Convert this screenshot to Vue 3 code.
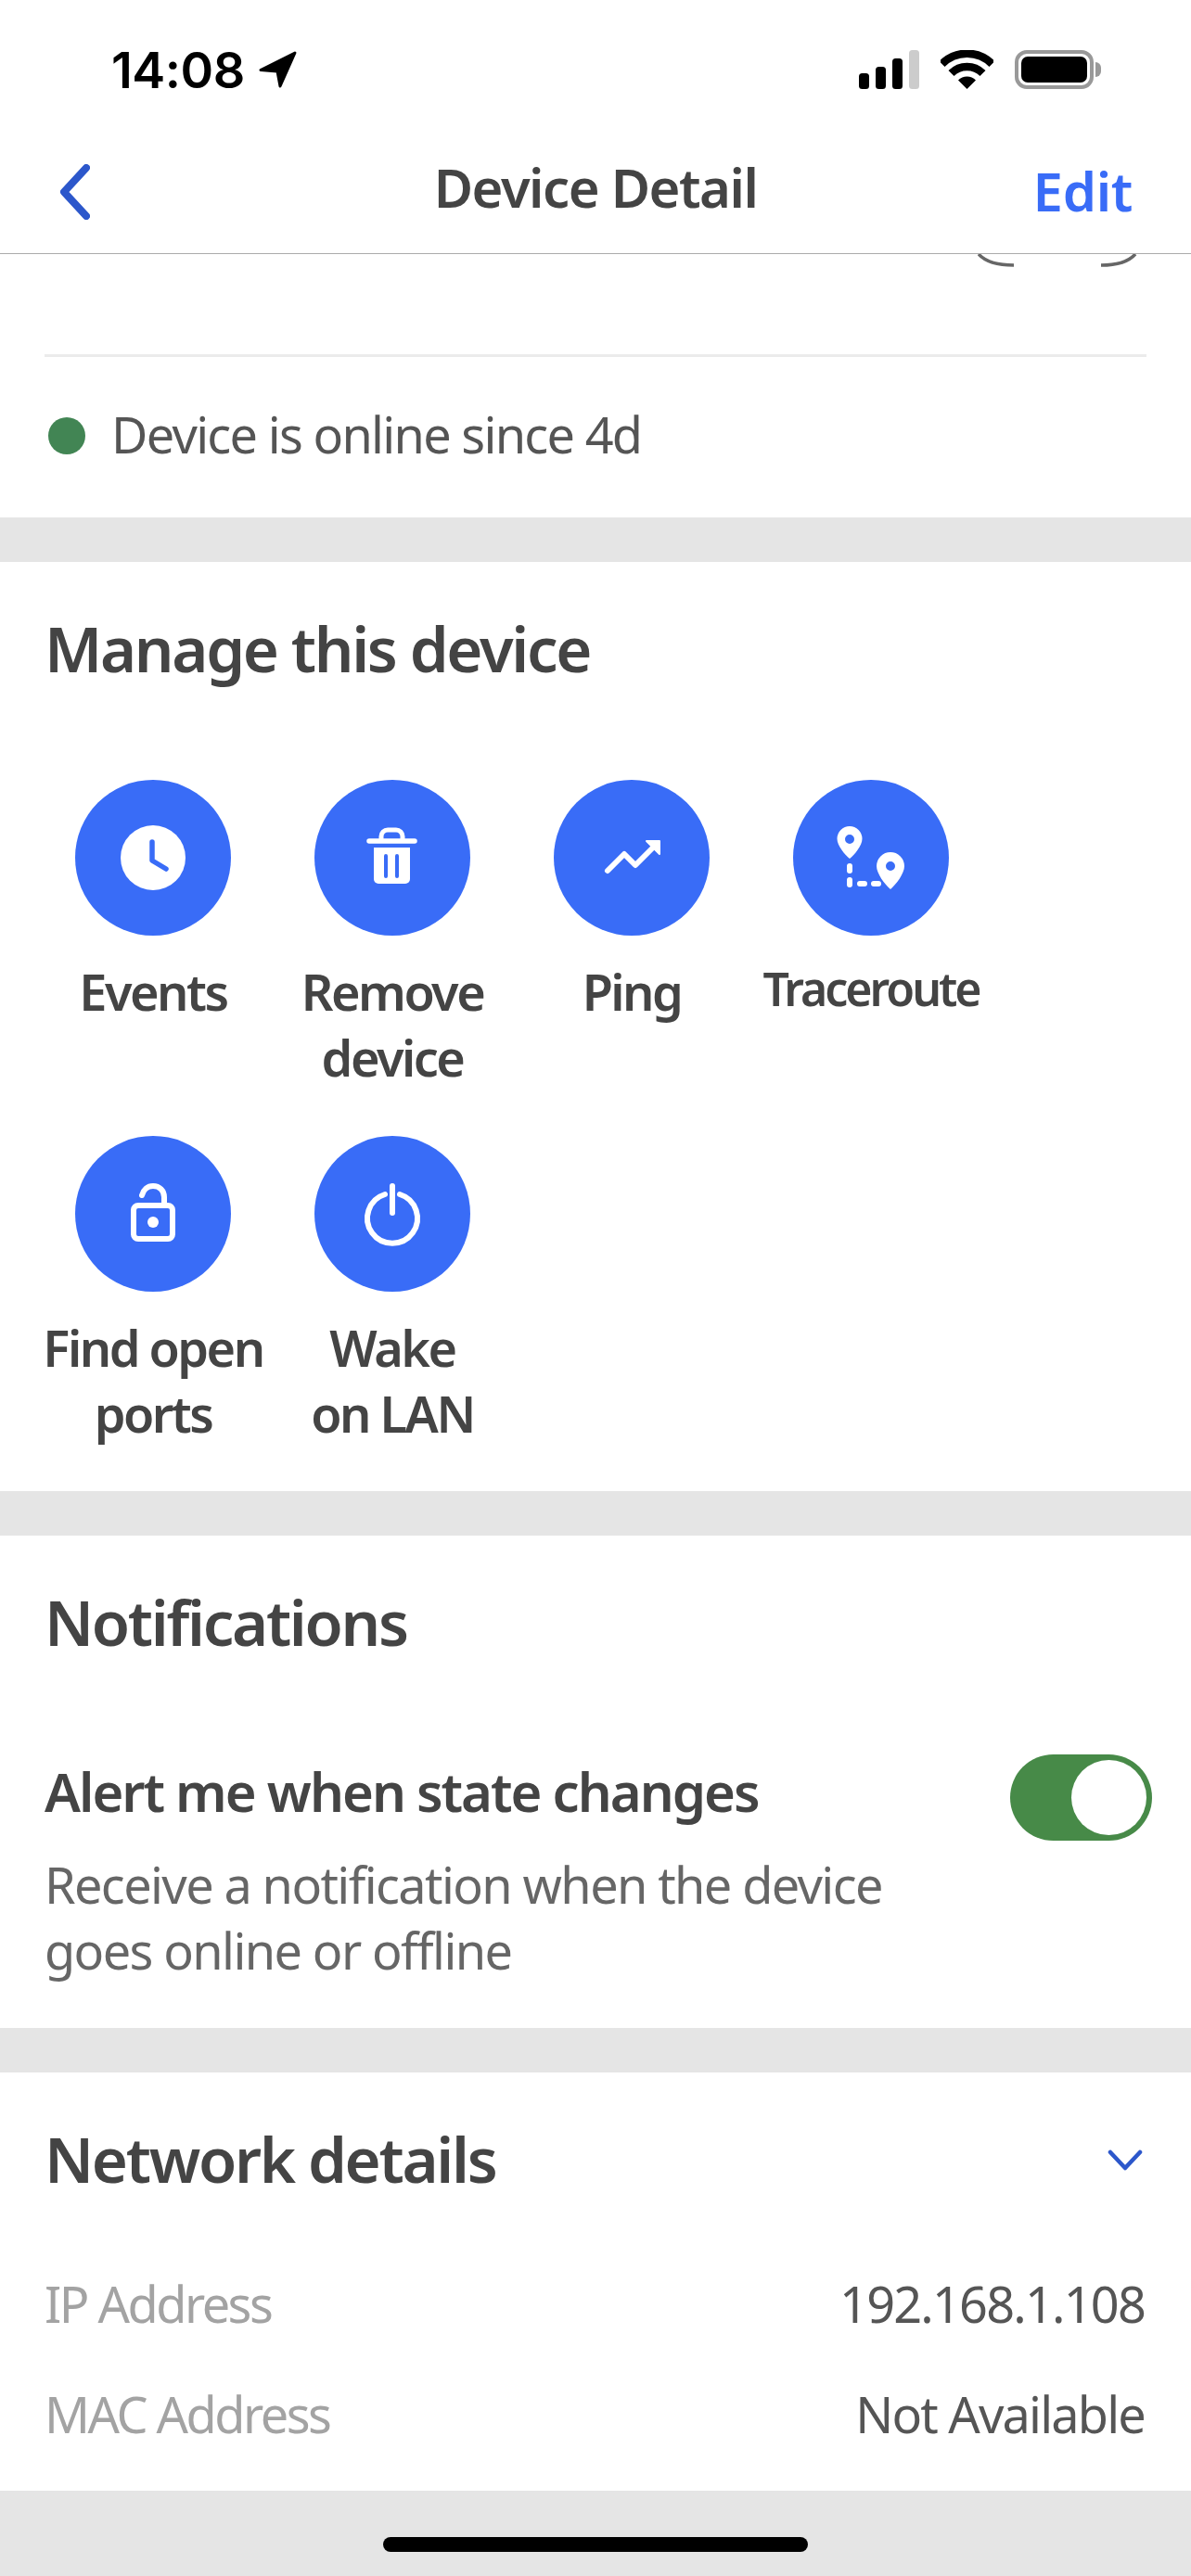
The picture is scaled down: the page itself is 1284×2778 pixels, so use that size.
<template>
  <div class="screen">
    <header class="top">
      <div class="status">
        <div class="clock">
          <span>14:08</span>
          <svg width="42" height="40" viewBox="0 0 42 40"><path d="M40 2 3 20.5 21 22l3 16z" fill="#000" stroke="#000" stroke-width="3" stroke-linejoin="round" /></svg>
        </div>
        <div class="indicators">
          <svg width="65" height="42" viewBox="0 0 65 42">
            <rect x="0" y="25" width="11" height="17" rx="3.5" fill="#000" />
            <rect x="18" y="18" width="11" height="24" rx="3.5" fill="#000" />
            <rect x="36" y="9" width="11" height="33" rx="3.5" fill="#000" />
            <rect x="54" y="0" width="11" height="42" rx="3.5" fill="#ccc" />
          </svg>
          <svg width="57" height="42" viewBox="0 0 57 42">
            <path d="M1.5 15a38 38 0 0 1 54 0M11.5 25a24 24 0 0 1 34 0" fill="none" stroke="#000" stroke-width="8.5" />
            <path d="M28.5 42 19 32.5a13.5 13.5 0 0 1 19 0z" fill="#000" />
          </svg>
          <div class="battery">
            <div class="battery-body"><div class="battery-fill" /></div>
            <div class="battery-nub" />
          </div>
        </div>
      </div>
      <nav class="nav">
        <svg class="back" width="33" height="60" viewBox="0 0 33 60"><path d="M29 4 5 30l24 26" fill="none" stroke="#2c57cb" stroke-width="8" stroke-linecap="round" stroke-linejoin="round" /></svg>
        <h1>Device Detail</h1>
        <span class="edit">Edit</span>
      </nav>
    </header>

    <section class="card summary">
      <svg class="clipped" width="172" height="14" viewBox="0 0 172 14">
        <path d="M1 0c7 8 21 12 38 12M133 12c17 0 30-4 37-12" fill="none" stroke="#666" stroke-width="3.500" />
      </svg>
      <div class="rule" />
      <div class="online"><i class="dot" />Device is online since 4d</div>
    </section>

    <section class="card manage">
      <h2>Manage this device</h2>
      <div class="actions">
        <div v-for="a in actions" :key="a.id" class="action">
          <svg class="action-icon" width="168" height="168" viewBox="0 0 168 168">
            <circle cx="84" cy="84" r="84" fill="#396cf7" />
            <g v-if="a.id === 'events'">
              <circle cx="84" cy="84" r="35" fill="#fff" />
              <path d="M83 67v20l15 9" fill="none" stroke="#396cf7" stroke-width="5.500" stroke-linecap="round" stroke-linejoin="round" />
            </g>
            <g v-else-if="a.id === 'remove'" fill="#fff">
              <path d="M72 64v-3a7 7 0 0 1 7-7h9a7 7 0 0 1 7 7v3" fill="none" stroke="#fff" stroke-width="5" />
              <path d="M59 66h49" stroke="#fff" stroke-width="5.500" stroke-linecap="round" />
              <path d="M64 73h39v34a5 5 0 0 1-5 5H69a5 5 0 0 1-5-5z" />
              <path d="M77 82v22M89 82v22" stroke="#396cf7" stroke-width="4" stroke-linecap="round" />
            </g>
            <g v-else-if="a.id === 'ping'">
              <path d="M58 98 76 80l12 12 22-22" fill="none" stroke="#fff" stroke-width="6" stroke-linecap="round" stroke-linejoin="round" />
              <path d="M100 66h14v14z" fill="#fff" stroke="#fff" stroke-width="2" stroke-linejoin="round" />
            </g>
            <g v-else-if="a.id === 'traceroute'">
              <path fill="#fff" fill-rule="evenodd" d="M61 50a13.500 13.500 0 0 1 13.500 13.500C74.500 71 66 81 61 85 56 81 47.500 71 47.500 63.500A13.500 13.500 0 0 1 61 50zm0 9a5 5 0 1 0 0 10 5 5 0 0 0 0-10z" />
              <path fill="#fff" fill-rule="evenodd" d="M105 78a15 15 0 0 1 15 15c0 8-9 20-15 25-6-5-15-17-15-25a15 15 0 0 1 15-15zm0 10a5 5 0 1 0 0 10 5 5 0 0 0 0-10z" />
              <path d="M61 93v5M61 108v5M72 112h5M87 112h5" fill="none" stroke="#fff" stroke-width="6" stroke-linecap="round" />
            </g>
            <g v-else-if="a.id === 'ports'">
              <rect x="63" y="75" width="42" height="36" rx="5" fill="none" stroke="#fff" stroke-width="6" />
              <circle cx="84" cy="93" r="6" fill="#fff" />
              <path d="M72 64c1.500-6 6-10 12-10 7 0 12 5 12 12v9" fill="none" stroke="#fff" stroke-width="6" stroke-linecap="round" />
            </g>
            <g v-else fill="none" stroke="#fff" stroke-width="6" stroke-linecap="round">
              <path d="M84 54v29" />
              <path d="M76 63a27 27 0 1 0 16 0" />
            </g>
          </svg>
          <span class="action-label" :class="{ small: a.id === 'traceroute' }">
            <template v-for="(line, i) in a.lines" :key="i">{{ line }}<br v-if="i < a.lines.length - 1" /></template>
          </span>
        </div>
      </div>
    </section>

    <section class="card notify">
      <h2>Notifications</h2>
      <div class="alert">
        <div class="alert-text">
          <h3>Alert me when state changes</h3>
          <p>Receive a notification when the device goes online or offline</p>
        </div>
        <div class="toggle"><div class="knob" /></div>
      </div>
    </section>

    <section class="card network">
      <div class="network-head">
        <h2>Network details</h2>
        <svg width="38" height="24" viewBox="0 0 38 24"><path d="M3 3l16 17L35 3" fill="none" stroke="#2c57cb" stroke-width="4.500" stroke-linecap="round" stroke-linejoin="round" /></svg>
      </div>
      <div v-for="row in details" :key="row.label" class="detail">
        <span class="detail-label">{{ row.label }}</span>
        <span class="detail-value">{{ row.value }}</span>
      </div>
    </section>

    <div class="home-bar" />
  </div>
</template>

<script setup>
const actions = [
  { id: 'events', lines: ['Events'] },
  { id: 'remove', lines: ['Remove', 'device'] },
  { id: 'ping', lines: ['Ping'] },
  { id: 'traceroute', lines: ['Traceroute'] },
  { id: 'ports', lines: ['Find open', 'ports'] },
  { id: 'wake', lines: ['Wake', 'on LAN'] }
]

const details = [
  { label: 'IP Address', value: '192.168.1.108' },
  { label: 'MAC Address', value: 'Not Available' }
]
</script>

<style scoped>
.screen {
  position: relative;
  width: 1284px;
  height: 2778px;
  overflow: hidden;
  background: #e5e5e5;
  font-family: "Noto Sans", sans-serif;
  color: #444;
}
.top { height: 273px; background: #fff; border-bottom: 1px solid #aaa; }
.status { display: flex; justify-content: space-between; padding: 54px 97px 0 120px; height: 100px; box-sizing: border-box; }
.clock { display: flex; align-items: center; gap: 14px; height: 42px; color: #000; font-family: Inter, sans-serif; font-weight: 600; font-size: 54px; letter-spacing: -0.5px; }
.indicators { display: flex; align-items: flex-start; gap: 23px; }
.battery { display: flex; align-items: center; gap: 2px; }
.battery-body { width: 85px; height: 42px; box-sizing: border-box; border: 4px solid #999; border-radius: 13px; padding: 3px; }
.battery-fill { height: 100%; background: #000; border-radius: 7px; }
.battery-nub { width: 6px; height: 16px; background: #999; border-radius: 0 8px 8px 0; }
.nav { position: relative; display: flex; justify-content: center; align-items: center; height: 173px; }
.back { position: absolute; left: 64px; top: 77px; }
.nav h1 { margin: 0; font-size: 58px; font-weight: 600; letter-spacing: -1.5px; color: #444; position: relative; top: 15px; }
.edit { position: absolute; right: 63px; top: 66px; font-size: 58px; font-weight: 600; letter-spacing: -0.3px; color: #396cf7; }
.card { background: #fff; padding: 0 48px; }
.summary { height: 284px; box-sizing: border-box; margin-bottom: 48px; }
.clipped { display: block; margin-left: auto; margin-right: 10px; }
.rule { height: 3px; background: #ebebeb; margin-top: 94px; }
.online { display: flex; align-items: center; gap: 28px; margin-top: 48px; padding-left: 4px; font-size: 54px; letter-spacing: -1.7px; line-height: 70px; color: #555; }
.dot { width: 40px; height: 40px; border-radius: 50%; background: #428554; position: relative; top: 2px; }
h2 { margin: 0; font-size: 67px; line-height: 80px; font-weight: 600; letter-spacing: -2.3px; color: #444; position: relative; top: -2px; }
.manage { height: 1002px; box-sizing: border-box; padding-top: 55px; margin-bottom: 48px; }
.actions { display: grid; grid-template-columns: repeat(4, 258px); grid-auto-rows: 384px; margin: 100px 0 0 -12px; }
.action { display: flex; flex-direction: column; align-items: center; }
.action-icon { display: block; }
.action-label { margin-top: 25px; text-align: center; font-size: 54px; line-height: 71px; font-weight: 600; letter-spacing: -2.500px; color: #444; white-space: nowrap; }
.action-label.small { font-size: 50px; letter-spacing: -3px; margin-top: 22px; }
.notify { height: 531px; box-sizing: border-box; padding-top: 55px; margin-bottom: 48px; }
.alert { display: flex; justify-content: space-between; margin-top: 106px; }
.alert-text { width: 960px; }
h3 { margin: 0; font-size: 58px; line-height: 70px; font-weight: 600; letter-spacing: -2px; color: #444; }
.alert-text p { margin: 30px 0 0; font-size: 54px; line-height: 71px; letter-spacing: -1.6px; color: #666; }
.toggle { width: 153px; height: 93px; margin: -5px -6px 0 0; box-sizing: border-box; padding: 6px; background: #478a48; border-radius: 47px; display: flex; justify-content: flex-end; }
.knob { width: 81px; height: 81px; border-radius: 50%; background: #fff; }
.network { height: 451px; box-sizing: border-box; padding-top: 55px; }
.network-head { display: flex; justify-content: space-between; align-items: center; padding-right: 4px; }
.detail { display: flex; justify-content: space-between; align-items: center; height: 119px; padding-right: 2px; font-size: 54px; }
.network-head + .detail { margin-top: 54px; }
.detail-label { color: #a3a3a3; letter-spacing: -2.500px; }
.detail-value { color: #555; letter-spacing: -1.8px; }
.home-bar { position: absolute; left: 413px; top: 2736px; width: 458px; height: 16px; border-radius: 8px; background: #000; }
</style>

<style>
html, body { margin: 0; background: #e5e5e5; }
</style>
